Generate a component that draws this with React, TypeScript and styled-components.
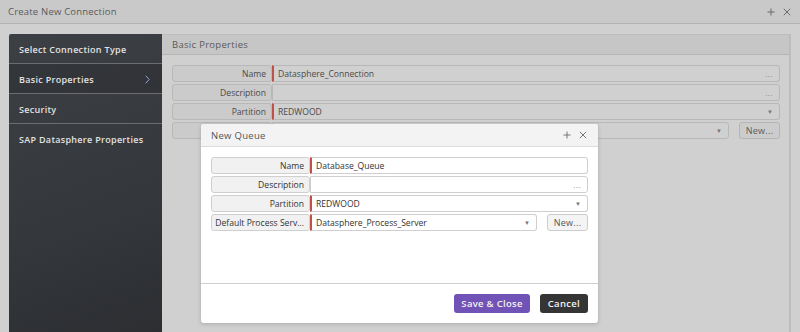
import React from "react";
import styled, { createGlobalStyle } from "styled-components";

const Global = createGlobalStyle`
  html, body { margin: 0; padding: 0; background: #d0d0d0; }
  body { font-family: "Open Sans", "Liberation Sans", sans-serif; }
  * { box-sizing: border-box; }
`;

const Page = styled.div`
  position: relative;
  width: 800px;
  height: 332px;
  overflow: hidden;
  background: #d0d0d0;
  display: flex;
  flex-direction: column;
`;

const TitleBar = styled.div`
  height: 24px;
  flex: none;
  background: #c9c9c9;
  border-bottom: 1px solid #b3b3b3;
  display: flex;
  align-items: center;
  justify-content: space-between;
  padding: 0 9px 0 8px;
  color: #5a5a5a;
  font-size: 9.5px;
  letter-spacing: 0.2px;
`;

const WinIcons = styled.div<{ $light?: boolean }>`
  display: flex;
  align-items: center;
  gap: 8px;
  color: ${(p) => (p.$light ? "#777" : "#6a6a6a")};
`;

const Main = styled.div`
  flex: 1;
  display: flex;
  padding: 10px 9px 0 9px;
  min-height: 0;
`;

const Sidebar = styled.div`
  width: 153px;
  flex: none;
  background: linear-gradient(160deg, #3c3f44 0%, #35383c 55%, #2c2e32 100%);
  border-top-left-radius: 2px;
  display: flex;
  flex-direction: column;
`;

const NavItem = styled.div<{ $active?: boolean; $last?: boolean }>`
  height: 30px;
  flex: none;
  display: flex;
  align-items: center;
  justify-content: space-between;
  padding: 1px 12px 0 10px;
  color: #e2e2e2;
  font-size: 9px;
  font-weight: 600;
  letter-spacing: 0.3px;
  white-space: nowrap;
  background: ${(p) => (p.$active ? "rgba(0,0,0,0.12)" : "transparent")};
  border-bottom: ${(p) => (p.$last ? "none" : "1px solid #6b6d71")};
`;

const Content = styled.div`
  flex: 1;
  display: flex;
  flex-direction: column;
  border-right: 2px solid #bdbdbd;
`;

const PanelHeader = styled.div`
  height: 21px;
  flex: none;
  background: #c6c6c6;
  border-top: 1px solid #bdbdbd;
  border-bottom: 1px solid #b5b5b5;
  display: flex;
  align-items: center;
  padding-left: 10px;
  color: #5a5a5a;
  font-size: 9.5px;
  letter-spacing: 0.3px;
`;

const Form = styled.div<{ $pad: string }>`
  display: flex;
  flex-direction: column;
  gap: 2px;
  padding: ${(p) => p.$pad};
`;

const Row = styled.div<{ $label: number }>`
  display: grid;
  grid-template-columns: ${(p) => p.$label}px 1fr;
  height: 17px;
`;

const Label = styled.div<{ $light?: boolean }>`
  border: 1px solid ${(p) => (p.$light ? "#cfcfcf" : "#b8b8b8")};
  border-radius: 3px;
  background: ${(p) => (p.$light ? "#f1f1f1" : "#cbcbcb")};
  color: ${(p) => (p.$light ? "#333" : "#4a4a4a")};
  font-size: 8.6px;
  display: flex;
  align-items: center;
  justify-content: flex-end;
  padding: 0 5px;
  white-space: nowrap;
  overflow: hidden;
`;

const Field = styled.div<{ $light?: boolean; $req?: boolean }>`
  border: 1px solid ${(p) => (p.$light ? "#cfcfcf" : "#b8b8b8")};
  border-left: ${(p) => (p.$req ? "2px solid #c0504a" : `1px solid ${p.$light ? "#cfcfcf" : "#b8b8b8"}`)};
  border-radius: 0 3px 3px 0;
  background: ${(p) => (p.$light ? "#ffffff" : "#d0d0d0")};
  color: ${(p) => (p.$light ? "#333" : "#4a4a4a")};
  font-size: 8.6px;
  display: flex;
  align-items: center;
  justify-content: space-between;
  padding: 0 6px 0 4px;
  min-width: 0;
`;

const Combo = styled.div`
  display: flex;
  gap: 10px;
  min-width: 0;
`;

const Select = styled(Field)`
  flex: 1;
`;

const Dots = styled.span`
  color: #8a8a8a;
  font-size: 8px;
  letter-spacing: 0.5px;
`;

const Caret = styled.span`
  color: #777;
  font-size: 6px;
`;

const NewButton = styled.div<{ $light?: boolean }>`
  width: 41px;
  flex: none;
  border: 1px solid ${(p) => (p.$light ? "#cccccc" : "#b5b5b5")};
  border-radius: 3px;
  background: ${(p) => (p.$light ? "#f4f4f4" : "#cccccc")};
  color: ${(p) => (p.$light ? "#555" : "#5a5a5a")};
  font-size: 9px;
  display: flex;
  align-items: center;
  justify-content: center;
  letter-spacing: 0.3px;
`;

const Modal = styled.div`
  position: absolute;
  left: 201px;
  top: 124px;
  width: 397px;
  height: 199px;
  background: #ffffff;
  border-radius: 3px;
  box-shadow: 0 1px 4px rgba(0, 0, 0, 0.18);
  display: flex;
  flex-direction: column;
  overflow: hidden;
`;

const ModalHeader = styled.div`
  height: 23px;
  flex: none;
  background: #f3f3f3;
  border-bottom: 1px solid #dcdcdc;
  display: flex;
  align-items: center;
  justify-content: space-between;
  padding: 0 11px 0 10px;
  color: #555;
  font-size: 9.5px;
  letter-spacing: 0.3px;
`;

const ModalBody = styled.div`
  flex: 1;
`;

const ModalFooter = styled.div`
  height: 40px;
  flex: none;
  border-top: 1px solid #cfcfcf;
  display: flex;
  align-items: center;
  justify-content: flex-end;
  gap: 10px;
  padding-right: 10px;
`;

const Button = styled.div<{ $primary?: boolean }>`
  height: 19px;
  padding: 0 ${(p) => (p.$primary ? "7px" : "8px")};
  border-radius: 3px;
  background: ${(p) => (p.$primary ? "#7152b6" : "#353535")};
  color: #f2f2f2;
  font-size: 9.5px;
  font-weight: 600;
  letter-spacing: 0.3px;
  display: flex;
  align-items: center;
`;

const PlusX = () => (
  <>
    <svg width="8" height="8" viewBox="0 0 8 8">
      <path d="M4 0.5V7.5M0.5 4H7.5" stroke="currentColor" strokeWidth="1" />
    </svg>
    <svg width="8" height="8" viewBox="0 0 8 8">
      <path d="M0.8 0.8L7.2 7.2M7.2 0.8L0.8 7.2" stroke="currentColor" strokeWidth="1" />
    </svg>
  </>
);

const Chevron = () => (
  <svg width="5" height="9" viewBox="0 0 5 9">
    <path d="M0.7 0.7L4.2 4.5L0.7 8.3" fill="none" stroke="#8fa8d8" strokeWidth="1" />
  </svg>
);

export default function App() {
  return (
    <Page>
      <Global />
      <TitleBar>
        <span>Create New Connection</span>
        <WinIcons>
          <PlusX />
        </WinIcons>
      </TitleBar>
      <Main>
        <Sidebar>
          <NavItem>Select Connection Type</NavItem>
          <NavItem $active>
            Basic Properties <Chevron />
          </NavItem>
          <NavItem>Security</NavItem>
          <NavItem $last>SAP Datasphere Properties</NavItem>
        </Sidebar>
        <Content>
          <PanelHeader>Basic Properties</PanelHeader>
          <Form $pad="10px 9px 0 10px">
            <Row $label={100}>
              <Label>Name</Label>
              <Field $req>
                <span>Datasphere_Connection</span>
                <Dots>...</Dots>
              </Field>
            </Row>
            <Row $label={100}>
              <Label>Description</Label>
              <Field>
                <span />
                <Dots>...</Dots>
              </Field>
            </Row>
            <Row $label={100}>
              <Label>Partition</Label>
              <Field $req>
                <span>REDWOOD</span>
                <Caret>▼</Caret>
              </Field>
            </Row>
            <Row $label={100}>
              <Label />
              <Combo>
                <Select>
                  <span />
                  <Caret>▼</Caret>
                </Select>
                <NewButton>New...</NewButton>
              </Combo>
            </Row>
          </Form>
        </Content>
      </Main>
      <Modal>
        <ModalHeader>
          <span>New Queue</span>
          <WinIcons $light>
            <PlusX />
          </WinIcons>
        </ModalHeader>
        <ModalBody>
          <Form $pad="10px 10px 0 10px">
            <Row $label={99}>
              <Label $light>Name</Label>
              <Field $light $req>
                <span>Database_Queue</span>
              </Field>
            </Row>
            <Row $label={99}>
              <Label $light>Description</Label>
              <Field $light>
                <span />
                <Dots>...</Dots>
              </Field>
            </Row>
            <Row $label={99}>
              <Label $light>Partition</Label>
              <Field $light $req>
                <span>REDWOOD</span>
                <Caret>▼</Caret>
              </Field>
            </Row>
            <Row $label={99}>
              <Label $light>Default Process Serv...</Label>
              <Combo>
                <Select $light $req>
                  <span>Datasphere_Process_Server</span>
                  <Caret>▼</Caret>
                </Select>
                <NewButton $light>New...</NewButton>
              </Combo>
            </Row>
          </Form>
        </ModalBody>
        <ModalFooter>
          <Button $primary>Save &amp; Close</Button>
          <Button>Cancel</Button>
        </ModalFooter>
      </Modal>
    </Page>
  );
}
